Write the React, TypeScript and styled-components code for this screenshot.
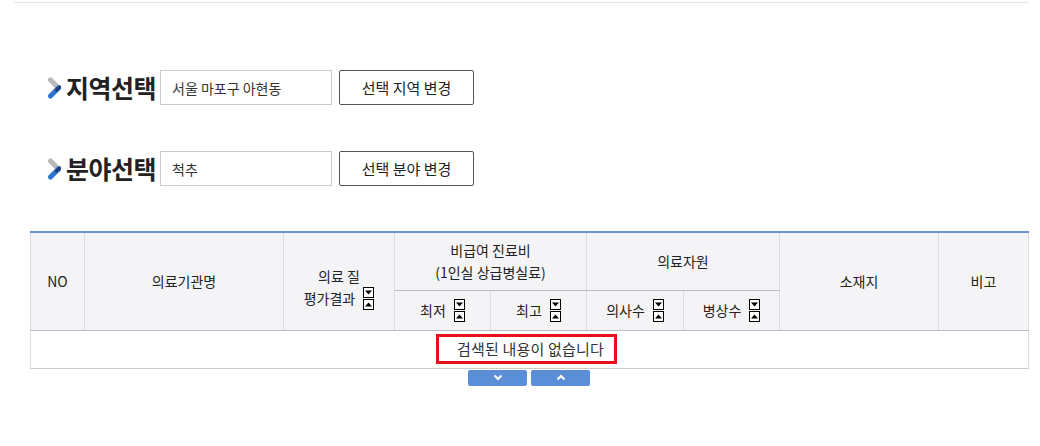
import React from "react";
import styled, { createGlobalStyle } from "styled-components";

const Global = createGlobalStyle`
  html, body { margin: 0; padding: 0; background: #fff; }
  body { font-family: "Noto Sans CJK KR", "Noto Sans", sans-serif; color: #222; }
`;

const Page = styled.div`
  width: 1040px;
  height: 446px;
  overflow: hidden;
`;

const TopRule = styled.div`
  margin: 2px 11px 0 14px;
  height: 1px;
  background: #e3e3e3;
`;

const Content = styled.div`
  padding: 67px 12px 0 30px;
`;

const SelectRow = styled.div<{ $mb?: number }>`
  display: flex;
  align-items: center;
  height: 35px;
  margin-left: 17px;
  margin-bottom: ${(p) => p.$mb ?? 0}px;
`;

const Title = styled.h2`
  margin: 0 4px 0 2px;
  font-size: 25px;
  font-weight: 700;
  letter-spacing: -0.5px;
  color: #222;
  line-height: 35px;
`;

const Field = styled.div`
  box-sizing: border-box;
  width: 172px;
  height: 35px;
  border: 1px solid #c5ccd3;
  padding-left: 11px;
  font-size: 14px;
  color: #333;
  display: flex;
  align-items: center;
`;

const Btn = styled.button`
  box-sizing: border-box;
  margin-left: 7px;
  width: 135px;
  height: 35px;
  border: 1px solid #555;
  border-radius: 2px;
  background: #fff;
  font-family: inherit;
  font-size: 15px;
  color: #222;
  padding: 0;
`;

const Table = styled.table`
  margin-top: 45px;
  width: 998px;
  border-collapse: collapse;
  border-top: 2px solid #6a93d0;
  table-layout: fixed;
  font-size: 14px;
`;

const Th = styled.th<{ $sub?: boolean }>`
  background: #f4f4f7;
  font-weight: 400;
  color: #222;
  border-left: 1px solid #dcdde2;
  border-right: 1px solid #dcdde2;
  border-bottom: 1px solid ${(p) => (p.$sub ? "#b8bdc8" : "#dcdde2")};
  padding: 0;
  line-height: 22px;
  text-align: center;
`;

const HeadRow = styled.tr<{ $h: number }>`
  height: ${(p) => p.$h}px;
`;

const GroupTh = styled(Th)`
  border-bottom: 1px solid #b8bdc8;
`;

const LastHeadRow = styled(HeadRow)`
  & > th { border-bottom: 1px solid #b8bdc8; }
`;

const Td = styled.td`
  height: 37px;
  border-left: 1px solid #dcdde2;
  border-right: 1px solid #dcdde2;
  border-bottom: 1px solid #c9ccd3;
  text-align: center;
  padding: 0;
`;

const Empty = styled.span`
  display: inline-block;
  box-sizing: border-box;
  width: 181px;
  height: 30px;
  margin-right: 7px;
  border: 3px solid #e8101a;
  line-height: 24px;
  font-size: 15px;
  color: #333;
  padding-left: 9px;
  letter-spacing: 0.2px;
`;

const QualityCell = styled.div`
  padding-top: 12px;
`;

const WithSort = styled.span`
  display: inline-flex;
  align-items: center;
  gap: 8px;
`;

const SortStack = styled.span`
  display: inline-flex;
  flex-direction: column;
  gap: 1px;
`;

const SortBox = styled.svg`
  display: block;
  width: 11px;
  height: 11px;
`;

const Pager = styled.div`
  display: flex;
  justify-content: center;
  gap: 4px;
  width: 998px;
  margin-top: 1px;
`;

const PageBtn = styled.button`
  width: 59px;
  height: 16px;
  border: none;
  border-radius: 2px;
  background: #5b8ed6;
  padding: 0;
  display: flex;
  align-items: center;
  justify-content: center;
`;

const Sort = ({ dir }: { dir: "down" | "up" }) => (
  <SortBox viewBox="0 0 11 11">
    <rect x="0.5" y="0.5" width="10" height="10" fill="#fff" stroke="#000" />
    {dir === "down" ? (
      <polygon points="2,3.5 9,3.5 5.5,7.5" fill="#000" />
    ) : (
      <polygon points="2,7.5 9,7.5 5.5,3.5" fill="#000" />
    )}
  </SortBox>
);

const SortPair = () => (
  <SortStack>
    <Sort dir="down" />
    <Sort dir="up" />
  </SortStack>
);

const Arrow = () => (
  <svg width="17" height="24" viewBox="0 0 17 24">
    <line x1="3.5" y1="4" x2="11.5" y2="12" stroke="#b9b9b9" strokeWidth="5" strokeLinecap="round" />
    <line x1="11.5" y1="12" x2="3.5" y2="20" stroke="#2f74d0" strokeWidth="5" strokeLinecap="round" />
    <line x1="12.5" y1="11" x2="9.5" y2="14" stroke="#1e3f78" strokeWidth="3.2" strokeLinecap="round" />
  </svg>
);

const Chevron = ({ up }: { up?: boolean }) => (
  <svg width="10" height="7" viewBox="0 0 10 7">
    <polyline
      points={up ? "1.5,5.5 5,2 8.5,5.5" : "1.5,1.5 5,5 8.5,1.5"}
      fill="none"
      stroke="#fff"
      strokeWidth="2.2"
    />
  </svg>
);

const colWidths = [54, 199, 111, 96, 96, 97, 96, 159, 90];

export default function App() {
  return (
    <Page>
      <Global />
      <TopRule />
      <Content>
        <SelectRow $mb={46}>
          <Arrow />
          <Title>지역선택</Title>
          <Field>서울 마포구 아현동</Field>
          <Btn>선택 지역 변경</Btn>
        </SelectRow>
        <SelectRow>
          <Arrow />
          <Title>분야선택</Title>
          <Field>척추</Field>
          <Btn>선택 분야 변경</Btn>
        </SelectRow>
        <Table>
          <colgroup>
            {colWidths.map((w, i) => (
              <col key={i} style={{ width: w }} />
            ))}
          </colgroup>
          <thead>
            <HeadRow $h={58}>
              <Th rowSpan={2} $sub>NO</Th>
              <Th rowSpan={2} $sub>의료기관명</Th>
              <Th rowSpan={2} $sub>
                <QualityCell>
                  의료 질
                  <br />
                  <WithSort>
                    평가결과
                    <SortPair />
                  </WithSort>
                </QualityCell>
              </Th>
              <GroupTh colSpan={2}>
                비급여 진료비
                <br />
                (1인실 상급병실료)
              </GroupTh>
              <GroupTh colSpan={2}>의료자원</GroupTh>
              <Th rowSpan={2} $sub>소재지</Th>
              <Th rowSpan={2} $sub>비고</Th>
            </HeadRow>
            <LastHeadRow $h={40}>
              <Th>
                <WithSort>최저<SortPair /></WithSort>
              </Th>
              <Th>
                <WithSort>최고<SortPair /></WithSort>
              </Th>
              <Th>
                <WithSort>의사수<SortPair /></WithSort>
              </Th>
              <Th>
                <WithSort>병상수<SortPair /></WithSort>
              </Th>
            </LastHeadRow>
          </thead>
          <tbody>
            <tr>
              <Td colSpan={9}>
                <Empty>검색된 내용이 없습니다</Empty>
              </Td>
            </tr>
          </tbody>
        </Table>
        <Pager>
          <PageBtn aria-label="down"><Chevron /></PageBtn>
          <PageBtn aria-label="up"><Chevron up /></PageBtn>
        </Pager>
      </Content>
    </Page>
  );
}
